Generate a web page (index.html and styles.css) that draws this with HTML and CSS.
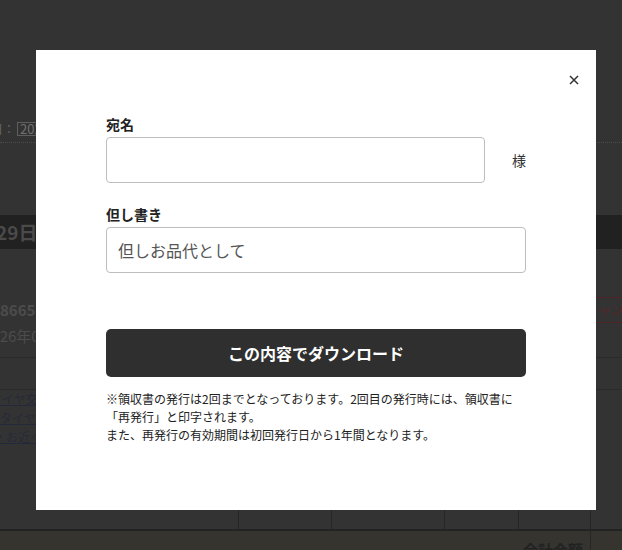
FILE: index.html
```html
<!DOCTYPE html>
<html lang="ja">
<head>
<meta charset="utf-8">
<title>領収書ダウンロード</title>
<link rel="stylesheet" href="styles.css">
</head>
<body>
<div class="page">
  <div class="filter"><span class="filter-label">日：</span><span class="filter-box">2025/11/01</span></div>
  <div class="dotted"></div>
  <div class="date-bar"><span class="date-text">29日</span></div>
  <div class="order">
    <div class="order-info">
      <div class="order-no">8665123</div>
      <div class="order-date">2026年01月15日</div>
    </div>
    <div class="cancel-btn">キャンセル</div>
  </div>
  <div class="plain-row"></div>
  <div class="links">
    <a class="link l1" href="#">タイヤ交換について</a>
    <a class="link l2" href="#">タイヤ組み替え</a>
    <a class="link l3" href="#">・お近くの店舗</a>
  </div>
  <div class="table-row">
    <div class="cell"></div><div class="cell"></div><div class="cell"></div><div class="cell"></div><div class="cell"></div><div class="cell"></div>
  </div>
  <div class="table-foot">
    <div class="foot-label">合計金額</div><div class="foot-cell"></div>
  </div>
</div>

<div class="overlay">
  <div class="modal" role="dialog">
    <button class="close" type="button" aria-label="閉じる">
      <svg width="10" height="10" viewBox="0 0 10 10"><path d="M1 1L9 9M9 1L1 9" stroke="#333" stroke-width="1.5" fill="none"/></svg>
    </button>
    <div class="field">
      <div class="label">宛名</div>
      <div class="field-row">
        <input class="input" type="text" value="">
        <span class="suffix">様</span>
      </div>
    </div>
    <div class="field field-2">
      <div class="label">但し書き</div>
      <input class="input" type="text" value="但しお品代として">
    </div>
    <button class="download" type="button">この内容でダウンロード</button>
    <p class="note">※領収書の発行は2回までとなっております。2回目の発行時には、領収書に<br>「再発行」と印字されます。<br>また、再発行の有効期間は初回発行日から1年間となります。</p>
  </div>
</div>
</body>
</html>
```
FILE: styles.css
```css
* { box-sizing: border-box; }
html, body { margin: 0; padding: 0; }
body {
  background: #333333;
  font-family: "Noto Sans CJK JP", "Noto Sans", sans-serif;
  overflow: hidden;
}
.page {
  width: 622px;
  height: 550px;
  overflow: hidden;
  background: #333333;
  padding-top: 122px;
}
.filter {
  height: 14px;
  font-size: 12px;
  line-height: 14px;
  display: flex;
  color: #666;
  white-space: nowrap;
}
.filter-label { margin-left: -9px; }
.filter-box {
  margin-left: 2px;
  border: 1px solid #5e5e5e;
  padding: 0 2px;
  line-height: 12px;
  color: #707070;
  font-size: 13px;
}
.dotted {
  margin-top: 6px;
  border-top: 1px dotted #4c4c4c;
}
.date-bar {
  margin-top: 72px;
  height: 34px;
  background: #212121;
  font-size: 19px;
  font-weight: bold;
  line-height: 34px;
  color: #4a4a4a;
  white-space: nowrap;
}
.date-text { display: inline-block; margin-left: -4px; }
.order {
  margin-top: 48px;
  display: flex;
  align-items: flex-start;
  padding-bottom: 8px;
  border-bottom: 1px solid #2a2a2a;
}
.order-info { flex: 1; font-size: 15px; line-height: 26px; color: #4c4c4c; white-space: nowrap; }
.order-no { font-weight: bold; }
.order-date { margin-left: -17px; }
.cancel-btn {
  flex: none;
  width: 100px;
  height: 26px;
  margin-right: -58px;
  border: 1px solid #4e2424;
  padding-left: 6px;
  font-size: 12px;
  line-height: 24px;
  color: #582626;
  white-space: nowrap;
}
.plain-row {
  height: 32px;
  border-bottom: 1px solid #2a2a2a;
}
.links {
  margin-top: -1px;
  display: flex;
  flex-direction: column;
  font-size: 12px;
  line-height: 19px;
  white-space: nowrap;
}
.link { color: #262a38; text-decoration: underline; text-decoration-color: #23293a; }
.l1 { margin-left: -10px; }
.l2 { margin-left: 0; }
.l3 { margin-left: -6px; }
.table-row {
  height: 85px;
  display: grid;
  grid-template-columns: 238px 93px 113px 74px 72px 32px;
  border-bottom: 2px solid #232323;
}
.cell + .cell { border-left: 1px solid #262626; }
.table-foot {
  height: 20px;
  background: #35342f;
  display: grid;
  grid-template-columns: 590px 32px;
}
.foot-label {
  text-align: right;
  padding-right: 7px;
  padding-top: 9px;
  font-size: 15px;
  font-weight: bold;
  line-height: 20px;
  color: #222;
}
.foot-cell { border-left: 1px solid #262626; }

.overlay {
  position: fixed;
  inset: 0;
}
.modal {
  position: absolute;
  left: 36px;
  top: 50px;
  width: 560px;
  height: 460px;
  background: #fff;
  padding: 64px 70px 0;
}
.close {
  position: absolute;
  top: 25px;
  right: 17px;
  width: 10px;
  height: 10px;
  padding: 0;
  border: 0;
  background: none;
  display: flex;
}
.label {
  font-size: 14px;
  font-weight: bold;
  line-height: 20px;
  color: #222;
  margin-bottom: 3px;
}
.field-row { display: flex; align-items: center; }
.input {
  display: block;
  width: 100%;
  height: 46px;
  border: 1px solid #bdbdbd;
  border-radius: 4px;
  padding: 0 11px;
  font-family: inherit;
  font-size: 16px;
  color: #555;
  background: #fff;
  outline: none;
}
.field-row .input { flex: 1; width: auto; min-width: 0; }
.suffix {
  margin-left: 27px;
  font-size: 14px;
  color: #333;
  white-space: nowrap;
}
.field-2 { margin-top: 21px; }
.download {
  display: block;
  width: 100%;
  margin-top: 56px;
  height: 48px;
  border: 0;
  border-radius: 5px;
  background: #2f2f2f;
  color: #fff;
  font-family: inherit;
  font-size: 16px;
  font-weight: bold;
}
.note {
  margin: 13px 0 0;
  font-size: 12px;
  line-height: 18px;
  color: #222;
  white-space: nowrap;
}
```
